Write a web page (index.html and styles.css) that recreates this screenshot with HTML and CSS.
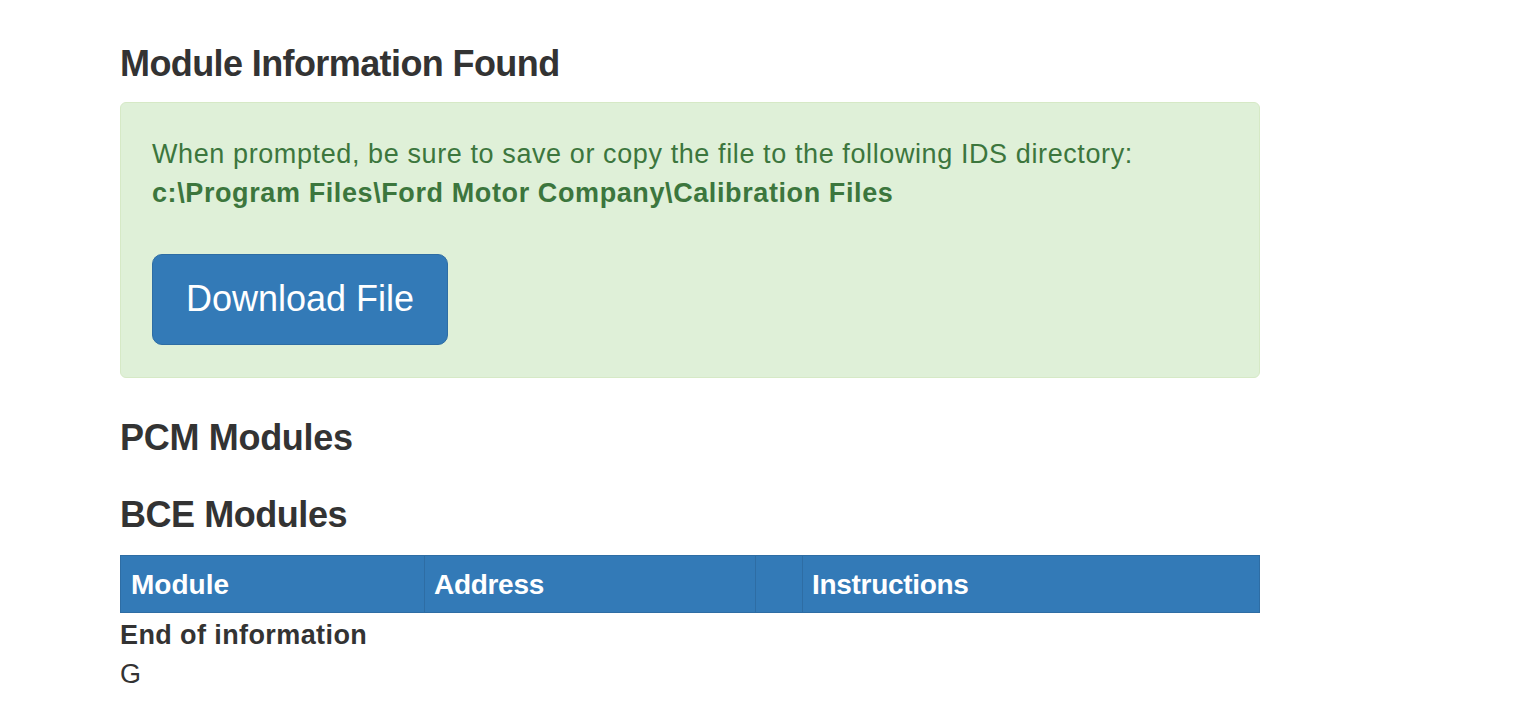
FILE: index.html
```html
<!DOCTYPE html>
<html>
<head>
<meta charset="utf-8">
<title>Module Information</title>
<link rel="stylesheet" href="styles.css">
</head>
<body>
<div class="container">
  <h3 class="title first">Module Information Found</h3>
  <div class="alert">
    <p class="alert-text">When prompted, be sure to save or copy the file to the following IDS directory:<br><strong>c:\Program Files\Ford Motor Company\Calibration Files</strong></p>
    <button class="btn">Download File</button>
  </div>
  <h3 class="title pcm">PCM Modules</h3>
  <h3 class="title bce">BCE Modules</h3>
  <table class="modules">
    <thead>
      <tr>
        <th class="c-module">Module</th>
        <th class="c-address">Address</th>
        <th class="c-empty"></th>
        <th class="c-instr">Instructions</th>
      </tr>
    </thead>
  </table>
  <div class="end">End of information</div>
  <div class="g">G</div>
</div>
</body>
</html>
```

FILE: styles.css
```css
html, body {
  margin: 0;
  padding: 0;
  background: #fff;
}
body {
  font-family: "Liberation Sans", Arial, Helvetica, sans-serif;
  color: #333;
  font-size: 26px;
}
.container {
  padding-left: 120px;
  width: 1140px;
}
.title {
  font-size: 36px;
  font-weight: bold;
  line-height: 1.1;
  margin: 0;
  color: #333;
  letter-spacing: -0.3px;
}
.first {
  margin-top: 44px;
  letter-spacing: -0.6px;
}
.pcm { margin-top: 40px; }
.bce { margin-top: 38px; letter-spacing: -0.45px; }
.alert {
  margin-top: 18px;
  background: #dff0d8;
  border: 1px solid #d6e9c6;
  border-radius: 6px;
  padding: 32px 31px 32px 31px;
  color: #3c763d;
}
.alert-text {
  margin: 0 0 41px 0;
  font-size: 27px;
  line-height: 39px;
  letter-spacing: 0.6px;
}
.alert-text strong { font-weight: bold; }
.btn {
  display: block;
  font-family: "Liberation Sans", Arial, Helvetica, sans-serif;
  font-size: 36px;
  line-height: 48px;
  color: #fff;
  background: #337ab7;
  border: 1px solid #2e6da4;
  border-radius: 10px;
  padding: 20.5px 33px 20.5px 33px;
  white-space: nowrap;
  text-align: left;
  cursor: pointer;
}
.modules {
  margin-top: 20px;
  width: 1140px;
  border-collapse: collapse;
}
.modules th {
  background: #337ab7;
  color: #fff;
  font-size: 28px;
  font-weight: bold;
  text-align: left;
  line-height: 32px;
  padding: 13px 9px 11px 9px;
  border: 1px solid #2e6da4;
}
.modules th.c-module { padding-left: 10px; }
.modules th.c-address,
.modules th.c-instr { letter-spacing: -0.3px; }
.c-module { width: 284px; }
.c-address { width: 312px; }
.c-empty { width: 28px; }
.end {
  font-size: 27px;
  font-weight: bold;
  line-height: 40px;
  margin-top: 2px;
  letter-spacing: 0.4px;
}
.g {
  font-size: 27px;
  line-height: 38px;
}
```
